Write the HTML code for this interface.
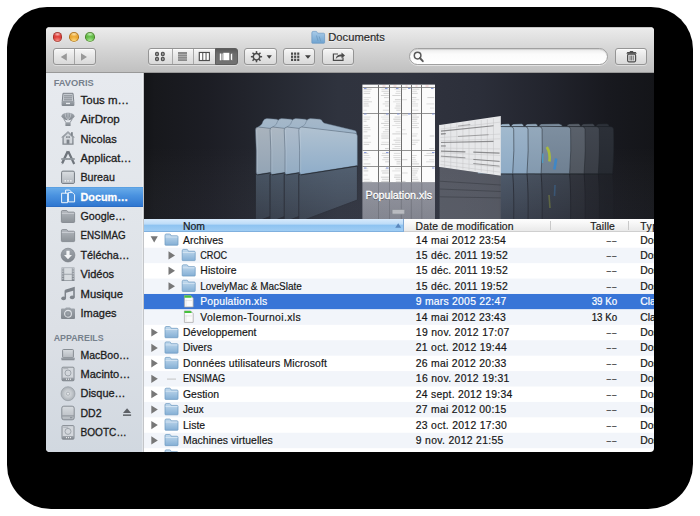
<!DOCTYPE html><html><head><meta charset="utf-8"><style>
*{margin:0;padding:0;box-sizing:border-box}
html,body{width:700px;height:516px;overflow:hidden;background:#fff;font-family:"Liberation Sans",sans-serif}
div,svg{position:absolute}
#shadow{left:7px;top:7px;width:686px;height:502px;background:#000;border-radius:40px 42px 45px 44px}
#win{left:46px;top:27px;width:608px;height:425px;background:#fff;border-radius:4px}
#toolbar{left:46px;top:27px;width:608px;height:46px;background:linear-gradient(#9a9a9a 0,#f0f0f0 1px,#e9e9e9 3px,#d5d5d5 50%,#c0c0c0 100%);border-bottom:1px solid #999;border-radius:4px 4px 0 0}
.btn{height:17px;top:48px;border:1px solid #959595;border-radius:3px;background:linear-gradient(#f6f6f6,#e6e6e6 50%,#d9d9d9);box-shadow:0 1px 0 rgba(255,255,255,.4),inset 0 1px 0 rgba(255,255,255,.7)}
.tl{top:32.1px;width:9.7px;height:9.7px;border-radius:50%;box-shadow:inset 0 0 0 .7px rgba(60,20,0,.35),0 .5px 0 rgba(255,255,255,.6)}
#sidebar{left:46px;top:73px;width:98px;height:379px;background:linear-gradient(#e7eaef,#e2e6eb 35%,#dce0e6 68%,#d1d8e0);border-bottom-left-radius:4px}
#header{left:144px;top:219px;width:510px;height:13px;background:linear-gradient(#fefefe,#f4f4f4 50%,#e9e9e9);border-bottom:1px solid #cfcfcf}
</style></head><body>
<div id="shadow"></div><div id="win"></div><div id="toolbar"></div>
<div class="tl" style="left:52.7px;background:radial-gradient(ellipse 40% 22% at 50% 22%,rgba(255,220,220,.8),rgba(255,255,255,0) 100%),radial-gradient(ellipse 50% 35% at 50% 85%,rgba(255,170,160,.7),rgba(255,255,255,0) 100%),radial-gradient(circle at 50% 50%,#e5453f 0,#d8403a 50%,#b32d28 80%,#8e2a26 100%)"></div>
<div class="tl" style="left:68.9px;background:radial-gradient(ellipse 40% 22% at 50% 22%,rgba(255,240,200,.8),rgba(255,255,255,0) 100%),radial-gradient(ellipse 50% 35% at 50% 85%,rgba(255,225,140,.8),rgba(255,255,255,0) 100%),radial-gradient(circle at 50% 50%,#f1b13d 0,#e8a532 50%,#c9861c 80%,#9a6a1e 100%)"></div>
<div class="tl" style="left:85.2px;background:radial-gradient(ellipse 40% 22% at 50% 22%,rgba(220,255,210,.8),rgba(255,255,255,0) 100%),radial-gradient(ellipse 50% 35% at 50% 85%,rgba(180,240,160,.8),rgba(255,255,255,0) 100%),radial-gradient(circle at 50% 50%,#6cc24e 0,#62b846 50%,#4a9a33 80%,#3a7328 100%)"></div>
<div class="btn" style="left:52.5px;width:43px"></div>
<div style="left:74px;top:49px;width:1px;height:15px;background:#a3a3a3"></div>
<div class="btn" style="left:147.5px;width:90.5px"></div>
<div style="left:171.5px;top:49px;width:1px;height:15px;background:#a8a8a8"></div>
<div style="left:193px;top:49px;width:1px;height:15px;background:#a8a8a8"></div>
<div style="left:214.5px;top:48px;width:23.5px;height:17px;background:linear-gradient(#595959,#6c6c6c 35%,#727272);border-radius:0 3px 3px 0;border:1px solid #5e5e5e"></div>
<div class="btn" style="left:244.3px;width:32.3px"></div>
<div class="btn" style="left:283.4px;width:32px"></div>
<div class="btn" style="left:322.3px;width:31.5px"></div>
<div style="left:409px;top:48px;width:199px;height:17px;border-radius:9px;background:linear-gradient(#ececec,#fbfbfb 35%,#fff);border:1px solid #a0a0a0;box-shadow:inset 0 1px 1px rgba(0,0,0,.12),0 1px 0 rgba(255,255,255,.5)"></div>
<div class="btn" style="left:615px;width:32px"></div>
<svg style="left:0;top:0" width="700" height="80" viewBox="0 0 700 80">
 <defs>
  <linearGradient id="fold" x1="0" y1="0" x2="0" y2="1"><stop offset="0" stop-color="#a9cbe8"/><stop offset="1" stop-color="#6fa3d0"/></linearGradient>
 </defs>
 <!-- back/forward arrows -->
 <path d="M60.8 57 L66.8 53.3 L66.8 60.7 Z" fill="#999"/>
 <path d="M87 57 L81 53.3 L81 60.7 Z" fill="#999"/>
 <!-- icon view -->
 <g fill="#9a9a9a" stroke="#4a4a4a" stroke-width="1.1">
  <rect x="155.6" y="52.3" width="2.8" height="3.4" rx="1.2"/>
  <rect x="161.4" y="52.3" width="2.8" height="3.4" rx="1.2"/>
  <rect x="155.6" y="57.3" width="2.8" height="3.4" rx="1.2"/>
  <rect x="161.4" y="57.3" width="2.8" height="3.4" rx="1.2"/>
 </g>
 <!-- list view -->
 <rect x="178" y="52" width="9" height="9" fill="#8a8a8a"/>
 <g fill="#b9b9b9"><rect x="178" y="54" width="9" height="0.7"/><rect x="178" y="56.3" width="9" height="0.7"/><rect x="178" y="58.6" width="9" height="0.7"/></g>
 <!-- column view -->
 <rect x="199.3" y="52.5" width="10" height="8" fill="none" stroke="#4d4d4d" stroke-width="1.2"/>
 <g fill="#fff"><rect x="200" y="53.2" width="2.2" height="6.6"/><rect x="203.3" y="53.2" width="2.2" height="6.6"/><rect x="206.5" y="53.2" width="2.2" height="6.6"/></g>
 <g fill="#4d4d4d"><rect x="202.3" y="53" width="0.9" height="7"/><rect x="205.6" y="53" width="0.9" height="7"/></g>
 <!-- cover flow icon (selected) -->
 <g fill="#fff">
  <rect x="219.8" y="53.5" width="1.6" height="6.8"/>
  <rect x="223.3" y="52.8" width="6" height="7.4"/>
  <path d="M230.8 54.2 L232.2 53.3 L232.2 60.5 L230.8 59.6 Z"/>
 </g>
 <rect x="222.2" y="53.5" width="0.8" height="6.6" fill="#cfcfcf"/>
 <!-- gear -->
 <g transform="translate(256.5 56.7)">
  <g fill="#4a4a4a">
   <rect x="-0.75" y="-5.6" width="1.5" height="11.2"/>
   <rect x="-0.75" y="-5.6" width="1.5" height="11.2" transform="rotate(45)"/>
   <rect x="-0.75" y="-5.6" width="1.5" height="11.2" transform="rotate(90)"/>
   <rect x="-0.75" y="-5.6" width="1.5" height="11.2" transform="rotate(135)"/>
  </g>
  <circle r="3.2" fill="#e2e2e2" stroke="#4a4a4a" stroke-width="1.5"/>
 </g>
 <path d="M266.6 55.2 L271.9 55.2 L269.25 58.7 Z" fill="#3f3f3f"/>
 <!-- arrange grid -->
 <g fill="#4a4a4a"><rect x="291.0" y="52.5" width="2.1" height="2.3"/><rect x="294.1" y="52.5" width="2.1" height="2.3"/><rect x="297.2" y="52.5" width="2.1" height="2.3"/><rect x="291.0" y="55.6" width="2.1" height="2.3"/><rect x="294.1" y="55.6" width="2.1" height="2.3"/><rect x="297.2" y="55.6" width="2.1" height="2.3"/><rect x="291.0" y="58.7" width="2.1" height="2.3"/><rect x="294.1" y="58.7" width="2.1" height="2.3"/><rect x="297.2" y="58.7" width="2.1" height="2.3"/></g>
 <path d="M305 55.3 L310.9 55.3 L307.95 58.7 Z" fill="#3f3f3f"/>
 <!-- share -->
 <path d="M338 54 L333.4 54 L333.4 60.4 L343 60.4 L343 57.5" fill="none" stroke="#4a4a4a" stroke-width="1.2"/>
 <path d="M335.8 59 C336.2 55.5 338.5 54.6 341.5 54.6 L341.5 52.6 L345 55.6 L341.5 58.6 L341.5 56.6 C339 56.6 337.2 57.2 335.8 59 Z" fill="#4a4a4a"/>
 <!-- magnifier -->
 <circle cx="417.6" cy="55.6" r="3.3" fill="none" stroke="#5a5a5a" stroke-width="1.5"/>
 <path d="M419.9 58 L422.8 61.2" stroke="#5a5a5a" stroke-width="1.9" stroke-linecap="round"/>
 <!-- trash -->
 <path d="M626.4 53.7 L627.3 51.9 L629.6 51.9 L630 51 L633 51 L633.4 51.9 L635.8 51.9 L636.8 53.7 Z" fill="#4d4d4d"/>
 <rect x="627.6" y="54.2" width="8" height="7.6" rx="1.2" fill="#dcdcdc" stroke="#4d4d4d" stroke-width="1.2"/>
 <g fill="#6a6a6a"><rect x="629.6" y="55.6" width="0.9" height="4.8"/><rect x="631.2" y="55.6" width="0.9" height="4.8"/><rect x="632.8" y="55.6" width="0.9" height="4.8"/></g>
 <!-- title folder -->
 <path d="M311.8 33 Q311.8 31.4 313 31.4 L316 31.4 Q316.8 31.4 317.2 32.4 L317.6 33.2 L323.6 33.2 Q324.6 33.2 324.6 34.2 L324.6 42.6 Q324.6 43.3 323.8 43.3 L312.6 43.3 Q311.8 43.3 311.8 42.6 Z" fill="url(#fold)" stroke="#5f90bd" stroke-width="0.6"/>
 <path d="M316.5 35.5 L318 41 M319.2 36.5 L320.8 41.5" stroke="#6f9cc2" stroke-width="0.9" fill="none"/>
 <text x="328.3" y="42.2" font-family="Liberation Sans" font-size="11.1" fill="#fff" opacity=".6" textLength="56.5" lengthAdjust="spacingAndGlyphs">Documents</text><text x="328.3" y="41.2" font-family="Liberation Sans" font-size="11.1" fill="#2a2a2a" stroke="#2a2a2a" stroke-width="0.2" textLength="56.5" lengthAdjust="spacingAndGlyphs">Documents</text>
</svg>
<div id="sidebar"></div>
<div style="left:142px;top:73px;width:1px;height:379px;background:rgba(255,255,255,.35)"></div>
<div style="left:143px;top:73px;width:1px;height:379px;background:#c3c5c8"></div>
<div style="left:46px;top:187px;width:97px;height:19.5px;background:linear-gradient(#67abe9,#4b93e0 40%,#2f77d0);border-top:1px solid #5aa0e2;border-bottom:1px solid #2a6cc4"></div>
<svg style="left:0;top:0" width="700" height="516" viewBox="0 0 700 516"><defs><linearGradient id="sic" x1="0" y1="0" x2="0" y2="1"><stop offset="0" stop-color="#a0a6ad"/><stop offset="1" stop-color="#80868d"/></linearGradient><linearGradient id="sfold" x1="0" y1="0" x2="0" y2="1"><stop offset="0" stop-color="#b3b8be"/><stop offset="1" stop-color="#8c9298"/></linearGradient></defs><text x="53.7" y="85.9" font-family="Liberation Sans" font-size="9.3" font-weight="bold" fill="#76808c" textLength="40" lengthAdjust="spacingAndGlyphs">FAVORIS</text><text x="53.7" y="340.6" font-family="Liberation Sans" font-size="9.3" font-weight="bold" fill="#76808c" textLength="50" lengthAdjust="spacingAndGlyphs">APPAREILS</text><text x="80.5" y="103.8" font-family="Liberation Sans" font-size="11.5" font-weight="normal" fill="#1c1c1c" stroke="#1c1c1c" stroke-width="0.3" textLength="48.6" lengthAdjust="spacingAndGlyphs" >Tous m…</text><text x="80.5" y="123.18" font-family="Liberation Sans" font-size="11.5" font-weight="normal" fill="#1c1c1c" stroke="#1c1c1c" stroke-width="0.3" textLength="39.3" lengthAdjust="spacingAndGlyphs" >AirDrop</text><text x="80.5" y="142.56" font-family="Liberation Sans" font-size="11.5" font-weight="normal" fill="#1c1c1c" stroke="#1c1c1c" stroke-width="0.3" textLength="36.3" lengthAdjust="spacingAndGlyphs" >Nicolas</text><text x="80.5" y="161.94" font-family="Liberation Sans" font-size="11.5" font-weight="normal" fill="#1c1c1c" stroke="#1c1c1c" stroke-width="0.3" textLength="51" lengthAdjust="spacingAndGlyphs" >Applicat…</text><text x="80.5" y="181.32" font-family="Liberation Sans" font-size="11.5" font-weight="normal" fill="#1c1c1c" stroke="#1c1c1c" stroke-width="0.3" textLength="34.4" lengthAdjust="spacingAndGlyphs" >Bureau</text><text x="80.5" y="201.50" font-family="Liberation Sans" font-size="11.5" font-weight="bold" fill="#1f5fb0" opacity=".5" textLength="47.6" lengthAdjust="spacingAndGlyphs">Docum…</text><text x="80.5" y="200.7" font-family="Liberation Sans" font-size="11.5" font-weight="bold" fill="#fff" stroke="#fff" stroke-width="0.3" textLength="47.6" lengthAdjust="spacingAndGlyphs" >Docum…</text><text x="80.5" y="220.08" font-family="Liberation Sans" font-size="11.5" font-weight="normal" fill="#1c1c1c" stroke="#1c1c1c" stroke-width="0.3" textLength="45.2" lengthAdjust="spacingAndGlyphs" >Google…</text><text x="80.5" y="239.46" font-family="Liberation Sans" font-size="11.5" font-weight="normal" fill="#1c1c1c" stroke="#1c1c1c" stroke-width="0.3" textLength="45.2" lengthAdjust="spacingAndGlyphs" >ENSIMAG</text><text x="80.5" y="258.84" font-family="Liberation Sans" font-size="11.5" font-weight="normal" fill="#1c1c1c" stroke="#1c1c1c" stroke-width="0.3" textLength="49" lengthAdjust="spacingAndGlyphs" >Télécha…</text><text x="80.5" y="278.22" font-family="Liberation Sans" font-size="11.5" font-weight="normal" fill="#1c1c1c" stroke="#1c1c1c" stroke-width="0.3" textLength="33.6" lengthAdjust="spacingAndGlyphs" >Vidéos</text><text x="80.5" y="297.6" font-family="Liberation Sans" font-size="11.5" font-weight="normal" fill="#1c1c1c" stroke="#1c1c1c" stroke-width="0.3" textLength="42.6" lengthAdjust="spacingAndGlyphs" >Musique</text><text x="80.5" y="316.98" font-family="Liberation Sans" font-size="11.5" font-weight="normal" fill="#1c1c1c" stroke="#1c1c1c" stroke-width="0.3" textLength="36.1" lengthAdjust="spacingAndGlyphs" >Images</text><text x="80.5" y="358.6" font-family="Liberation Sans" font-size="11.5" font-weight="normal" fill="#1c1c1c" stroke="#1c1c1c" stroke-width="0.3" textLength="49" lengthAdjust="spacingAndGlyphs" >MacBoo…</text><text x="80.5" y="378.0" font-family="Liberation Sans" font-size="11.5" font-weight="normal" fill="#1c1c1c" stroke="#1c1c1c" stroke-width="0.3" textLength="49.8" lengthAdjust="spacingAndGlyphs" >Macinto…</text><text x="80.5" y="397.4" font-family="Liberation Sans" font-size="11.5" font-weight="normal" fill="#1c1c1c" stroke="#1c1c1c" stroke-width="0.3" textLength="45" lengthAdjust="spacingAndGlyphs" >Disque…</text><text x="80.5" y="416.8" font-family="Liberation Sans" font-size="11.5" font-weight="normal" fill="#1c1c1c" stroke="#1c1c1c" stroke-width="0.3" textLength="21.1" lengthAdjust="spacingAndGlyphs" >DD2</text><text x="80.5" y="436.2" font-family="Liberation Sans" font-size="11.5" font-weight="normal" fill="#1c1c1c" stroke="#1c1c1c" stroke-width="0.3" textLength="46" lengthAdjust="spacingAndGlyphs" >BOOTC…</text><path d="M123 413 L127.05 408.3 L131.1 413 Z" fill="#5d6166"/><rect x="123" y="414.4" width="8.1" height="1.5" fill="#5d6166"/><defs><linearGradient id="sdesk" x1="0" y1="0" x2="0" y2="1"><stop offset="0" stop-color="#d8dce0"/><stop offset="1" stop-color="#b4b9bf"/></linearGradient><radialGradient id="scd"><stop offset="0" stop-color="#e3e6e9"/><stop offset="1" stop-color="#aab0b6"/></radialGradient></defs><g transform="translate(61 92.8)"><path d="M2 0.5 L12 0.5 L12.8 8.8 L1.2 8.8 Z" fill="#c4c9cf" stroke="#7d838a" stroke-width="1"/><rect x="3" y="2.6" width="8" height="0.9" fill="#7d838a"/><rect x="3" y="4.6" width="8" height="0.9" fill="#7d838a"/><rect x="3" y="6.6" width="8" height="0.9" fill="#7d838a"/><rect x="0.6" y="8.4" width="12.8" height="4.8" rx="1" fill="url(#sic)"/><rect x="5" y="10" width="4" height="1.3" fill="#e8ebee"/></g><g transform="translate(61 112)"><path d="M0.4 4.6 C0.4 -0.6 13.6 -0.6 13.6 4.6 C12.4 7 9.6 8.3 7 8.3 C4.4 8.3 1.6 7 0.4 4.6 Z" fill="url(#sic)"/><path d="M7 0.5 L7 8 M4.2 1.2 Q3.8 5 6.8 8 M9.8 1.2 Q10.2 5 7.2 8" stroke="#c9cdd2" stroke-width="0.7" fill="none"/><path d="M2.8 7 L4.9 10.5 M11.2 7 L9.1 10.5" stroke="#7d838a" stroke-width="0.8"/><rect x="4.4" y="10.3" width="5.2" height="3.6" rx="0.5" fill="url(#sic)"/></g><g transform="translate(61 131)"><path d="M7 0 L14 6.6 L12.6 6.6 L12.6 13.7 L1.4 13.7 L1.4 6.6 L0 6.6 Z" fill="url(#sic)"/><path d="M7 2.2 L11.2 6.3 L11.2 12.6 L2.8 12.6 L2.8 6.3 Z" fill="#d3d7dc"/><rect x="10" y="1.2" width="1.8" height="3.5" fill="#7d838a"/><rect x="5.6" y="8.6" width="2.8" height="4.2" fill="#7d838a"/><rect x="5.2" y="5.2" width="1.4" height="1.8" fill="#7d838a"/><rect x="7.4" y="5.2" width="1.4" height="1.8" fill="#7d838a"/></g><g transform="translate(61 150.6)"><path d="M7.2 0.6 L13.2 13.4" stroke="#6f757c" stroke-width="2.2" fill="none"/><path d="M6.8 0.6 L1.2 12.6" stroke="#6f757c" stroke-width="2.4" fill="none"/><path d="M1.2 12.6 L0.6 14 L2.2 13.2 Z" fill="#6f757c"/><path d="M0.3 8.4 L13.7 8.4" stroke="#8a9097" stroke-width="1.8"/><path d="M1 8.4 L13 8.4" stroke="#c3c8cd" stroke-width="0.5" stroke-dasharray="0.6 1"/></g><g transform="translate(61 170.6)"><rect x="0.5" y="0.5" width="13" height="12.4" rx="1.5" fill="#b9bec4" stroke="#7d838a" stroke-width="1"/><rect x="1.4" y="1.4" width="11.2" height="10.6" fill="url(#sdesk)"/><rect x="3.6" y="9.6" width="1.3" height="1.3" fill="#fff"/><rect x="6.4" y="9.6" width="1.3" height="1.3" fill="#fff"/><rect x="9.2" y="9.6" width="1.3" height="1.3" fill="#fff"/></g><g transform="translate(61 189.6)"><path d="M4.6 0.5 L8.5 0.5 L11 3 L11 10 L4.6 10 Z" fill="none" stroke="#fff" stroke-width="0.9"/><path d="M7.4 3 L11.4 3 L13.6 5.2 L13.6 12.3 L7.4 12.3 Z" fill="#4a90dc" stroke="#fff" stroke-width="0.9"/><path d="M0.6 3.6 L6.6 3.6 L6.6 13.1 L0.6 13.1 Z" fill="#4a90dc" stroke="#fff" stroke-width="0.9"/></g><g transform="translate(61 210.1)"><path d="M0.4 1.6 Q0.4 0.4 1.4 0.4 L5.4 0.4 Q6.2 0.4 6.5 1.3 L6.8 2 L12.6 2 Q13.6 2 13.6 3 L13.6 11.6 Q13.6 12.4 12.8 12.4 L1.2 12.4 Q0.4 12.4 0.4 11.6 Z" fill="url(#sfold)" stroke="#7d838a" stroke-width="0.8"/><path d="M0.8 3.2 L13.2 3.2" stroke="#d4d8dd" stroke-width="0.8"/></g><g transform="translate(61 229.2)"><path d="M0.4 1.6 Q0.4 0.4 1.4 0.4 L5.4 0.4 Q6.2 0.4 6.5 1.3 L6.8 2 L12.6 2 Q13.6 2 13.6 3 L13.6 11.6 Q13.6 12.4 12.8 12.4 L1.2 12.4 Q0.4 12.4 0.4 11.6 Z" fill="url(#sfold)" stroke="#7d838a" stroke-width="0.8"/><path d="M0.8 3.2 L13.2 3.2" stroke="#d4d8dd" stroke-width="0.8"/></g><g transform="translate(61 248.1)"><circle cx="7" cy="7" r="6.9" fill="url(#sic)"/><circle cx="7" cy="7" r="6.9" fill="none" stroke="#737980" stroke-width=".6"/><path d="M5.4 2.6 L8.6 2.6 L8.6 6.8 L11 6.8 L7 11.2 L3 6.8 L5.4 6.8 Z" fill="#f4f5f7"/></g><g transform="translate(61 267.1)"><rect x="0.5" y="0.3" width="13" height="13.6" fill="url(#sic)"/><rect x="3.2" y="1" width="7.6" height="5.7" fill="#d8dce0"/><rect x="3.2" y="7.5" width="7.6" height="5.7" fill="#d8dce0"/><rect x="1.2" y="1.0" width="1.2" height="1.2" fill="#c8ccd1"/><rect x="11.6" y="1.0" width="1.2" height="1.2" fill="#c8ccd1"/><rect x="1.2" y="3.5" width="1.2" height="1.2" fill="#c8ccd1"/><rect x="11.6" y="3.5" width="1.2" height="1.2" fill="#c8ccd1"/><rect x="1.2" y="6.0" width="1.2" height="1.2" fill="#c8ccd1"/><rect x="11.6" y="6.0" width="1.2" height="1.2" fill="#c8ccd1"/><rect x="1.2" y="8.5" width="1.2" height="1.2" fill="#c8ccd1"/><rect x="11.6" y="8.5" width="1.2" height="1.2" fill="#c8ccd1"/><rect x="1.2" y="11.0" width="1.2" height="1.2" fill="#c8ccd1"/><rect x="11.6" y="11.0" width="1.2" height="1.2" fill="#c8ccd1"/></g><g transform="translate(61 287.4)"><path d="M4.3 3 L13 0.4 L13 10" stroke="#7e848b" stroke-width="1.6" fill="none"/><path d="M4.3 3 L13 0.4 L13 3 L4.3 5.5 Z" fill="#7e848b"/><path d="M4.3 3 L4.3 11" stroke="#7e848b" stroke-width="1.5"/><ellipse cx="2.6" cy="11" rx="2.4" ry="1.8" fill="#7e848b"/><ellipse cx="11.2" cy="10" rx="2.4" ry="1.8" fill="#7e848b"/></g><g transform="translate(61 307.4)"><path d="M4 1.2 L5 0 L9 0 L10 1.2 L13 1.2 Q14 1.2 14 2.2 L14 10.6 Q14 11.6 13 11.6 L1 11.6 Q0 11.6 0 10.6 L0 2.2 Q0 1.2 1 1.2 Z" fill="url(#sic)"/><circle cx="7" cy="6.4" r="3.4" fill="none" stroke="#dfe2e6" stroke-width="1.1"/><circle cx="7" cy="6.4" r="1.4" fill="#9aa0a7"/></g><g transform="translate(61 349)"><rect x="1.6" y="0.5" width="10.8" height="8.2" rx="0.8" fill="url(#sdesk)" stroke="#7d838a" stroke-width="0.9"/><path d="M0 8.8 L14 8.8 L13.4 11.2 L0.6 11.2 Z" fill="url(#sic)"/></g><g transform="translate(61 366.8)"><rect x="1" y="0.4" width="12" height="13.6" rx="1" fill="#d3d7dc" stroke="#7d838a" stroke-width="0.9"/><circle cx="7" cy="6.2" r="3" fill="none" stroke="#9aa0a7" stroke-width="0.9"/><rect x="2.2" y="1.6" width="5" height="0.7" fill="#9aa0a7"/><rect x="1" y="10.8" width="12" height="3.2" fill="url(#sic)"/><rect x="5" y="11.8" width="1" height="1.2" fill="#e8eaec"/><rect x="7" y="11.8" width="1" height="1.2" fill="#e8eaec"/><rect x="9" y="11.8" width="1" height="1.2" fill="#e8eaec"/></g><g transform="translate(61 386.5)"><circle cx="7" cy="7.2" r="7" fill="url(#scd)" stroke="#8f959c" stroke-width="0.6"/><circle cx="7" cy="7.2" r="4" fill="none" stroke="#c6cacf" stroke-width="0.7"/><circle cx="7" cy="7.2" r="1.6" fill="#e4e7ea" stroke="#8f959c" stroke-width="0.6"/></g><g transform="translate(61 405.7)"><rect x="0.8" y="0.5" width="12.4" height="13.6" rx="2" fill="url(#sdesk)" stroke="#7d838a" stroke-width="0.9"/><path d="M1.2 10.2 L12.8 10.2" stroke="#7d838a" stroke-width="0.8"/><rect x="9" y="11.6" width="2.4" height="0.9" fill="#7d838a"/></g><g transform="translate(61 425.2)"><rect x="1" y="0.4" width="12" height="13.6" rx="1" fill="#d3d7dc" stroke="#7d838a" stroke-width="0.9"/><circle cx="7" cy="6.2" r="3" fill="none" stroke="#9aa0a7" stroke-width="0.9"/><rect x="2.2" y="1.6" width="5" height="0.7" fill="#9aa0a7"/><rect x="1" y="10.8" width="12" height="3.2" fill="url(#sic)"/><rect x="5" y="11.8" width="1" height="1.2" fill="#e8eaec"/><rect x="7" y="11.8" width="1" height="1.2" fill="#e8eaec"/><rect x="9" y="11.8" width="1" height="1.2" fill="#e8eaec"/></g></svg>
<svg style="left:144px;top:73px" width="510" height="146" viewBox="144 73 510 146"><defs>
<linearGradient id="cbg" x1="144" y1="0" x2="654" y2="0" gradientUnits="userSpaceOnUse">
 <stop offset="0" stop-color="#131417"/><stop offset="0.02" stop-color="#17181c"/><stop offset="0.125" stop-color="#1c1d24"/><stop offset="0.263" stop-color="#262932"/><stop offset="0.38" stop-color="#2f333e"/><stop offset="0.498" stop-color="#31343f"/><stop offset="0.655" stop-color="#2c2f3a"/><stop offset="0.792" stop-color="#22242d"/><stop offset="0.91" stop-color="#18191f"/><stop offset="1" stop-color="#141519"/>
</linearGradient>
<linearGradient id="cvert" x1="0" y1="73" x2="0" y2="219" gradientUnits="userSpaceOnUse">
 <stop offset="0" stop-color="#fff" stop-opacity="0"/><stop offset="0.5" stop-color="#fff" stop-opacity="0"/><stop offset="1" stop-color="#9aa4c0" stop-opacity="0.05"/>
</linearGradient>
<linearGradient id="fbody" x1="0" y1="0" x2="0" y2="1">
 <stop offset="0" stop-color="#b4c4d2"/><stop offset="0.5" stop-color="#a2b9cd"/><stop offset="1" stop-color="#8fb0ce"/>
</linearGradient>
<linearGradient id="ftab" x1="0" y1="0" x2="0" y2="1">
 <stop offset="0" stop-color="#a6b8c9"/><stop offset="1" stop-color="#9cb3c8"/>
</linearGradient>
<linearGradient id="refl" x1="0" y1="0" x2="0" y2="1">
 <stop offset="0" stop-color="#8aa2ba" stop-opacity="0.42"/><stop offset="1" stop-color="#8aa2ba" stop-opacity="0.05"/>
</linearGradient>
<linearGradient id="drefl" x1="0" y1="181" x2="0" y2="219" gradientUnits="userSpaceOnUse">
 <stop offset="0" stop-color="#e2e3ec" stop-opacity="0.55"/><stop offset="1" stop-color="#e2e3ec" stop-opacity="0.45"/>
</linearGradient>
<linearGradient id="rfbody" x1="0" y1="0" x2="0" y2="1">
 <stop offset="0" stop-color="#a3bdd3"/><stop offset="1" stop-color="#8db0cf"/>
</linearGradient>
</defs><rect x="144" y="73" width="510" height="146" fill="url(#cbg)"/><rect x="144" y="73" width="510" height="146" fill="url(#cvert)"/><mask id="rmask" maskUnits="userSpaceOnUse" x="144" y="150" width="510" height="70"><rect x="144" y="150" width="510" height="70" fill="url(#mgrad)"/></mask><linearGradient id="mgrad" x1="0" y1="165" x2="0" y2="219" gradientUnits="userSpaceOnUse"><stop offset="0" stop-color="#fff"/><stop offset="1" stop-color="#fff" stop-opacity="0.45"/></linearGradient><g opacity="0.34" mask="url(#rmask)"><path d="M255.4 174.4 L314.0 165.6 L314.0 200 L255.4 222 Z" fill="#90b0cc" stroke="#20242b" stroke-width="0.9"/><path d="M270.0 174.4 L328.6 165.6 L328.6 200 L270.0 222 Z" fill="#90b0cc" stroke="#20242b" stroke-width="0.9"/><path d="M284.2 174.4 L342.8 165.6 L342.8 200 L284.2 222 Z" fill="#90b0cc" stroke="#20242b" stroke-width="0.9"/><path d="M298.8 174.4 L357.40000000000003 165.6 L357.40000000000003 200 L298.8 222 Z" fill="#90b0cc" stroke="#20242b" stroke-width="0.9"/></g><linearGradient id="lfg0" x1="0" y1="0" x2="0" y2="1"><stop offset="0" stop-color="#a9b3bd"/><stop offset="1" stop-color="#93a4b5"/></linearGradient><path d="M257.4 127.5 L259.9 125.8 Q262.0 125 263.0 121.2 Q264.0 118.6 266.9 118.6 L276.4 119.2 Q278.4 119.5 279.4 122 Q280.4 123.4 282.4 123.5 L311.5 130.6 Q313.0 131 313.0 132.5 L313.0 134 Z" fill="url(#ftab)" stroke="#5f7286" stroke-width="0.45"/><path d="M255.4 130 Q255.4 127 258.4 127 L311.5 133.3 Q314.0 133.6 314.0 136 L314.0 165.6 L257.9 174.4 Q256.2 174.6 256.2 172.5 Q256.7 150 255.4 130 Z" fill="url(#lfg0)" stroke="#4e5f71" stroke-width="0.5"/><path d="M256.7 130 Q257.6 150 257.3 172" stroke="#d0dae3" stroke-width="0.6" fill="none" opacity=".45"/><path d="M257.4 174.9 L314.0 166.1" stroke="#1e2228" stroke-width="1" opacity=".7"/><linearGradient id="lfg1" x1="0" y1="0" x2="0" y2="1"><stop offset="0" stop-color="#adb8c3"/><stop offset="1" stop-color="#94a9bc"/></linearGradient><path d="M272.0 127.5 L274.5 125.8 Q276.6 125 277.6 121.2 Q278.6 118.6 281.5 118.6 L291.0 119.2 Q293.0 119.5 294.0 122 Q295.0 123.4 297.0 123.5 L326.1 130.6 Q327.6 131 327.6 132.5 L327.6 134 Z" fill="url(#ftab)" stroke="#5f7286" stroke-width="0.45"/><path d="M270.0 130 Q270.0 127 273.0 127 L326.1 133.3 Q328.6 133.6 328.6 136 L328.6 165.6 L272.5 174.4 Q270.8 174.6 270.8 172.5 Q271.3 150 270.0 130 Z" fill="url(#lfg1)" stroke="#4e5f71" stroke-width="0.5"/><path d="M271.3 130 Q272.2 150 271.9 172" stroke="#d0dae3" stroke-width="0.6" fill="none" opacity=".45"/><path d="M272.0 174.9 L328.6 166.1" stroke="#1e2228" stroke-width="1" opacity=".7"/><linearGradient id="lfg2" x1="0" y1="0" x2="0" y2="1"><stop offset="0" stop-color="#aebccb"/><stop offset="1" stop-color="#93acc3"/></linearGradient><path d="M286.2 127.5 L288.7 125.8 Q290.8 125 291.8 121.2 Q292.8 118.6 295.7 118.6 L305.2 119.2 Q307.2 119.5 308.2 122 Q309.2 123.4 311.2 123.5 L340.3 130.6 Q341.8 131 341.8 132.5 L341.8 134 Z" fill="url(#ftab)" stroke="#5f7286" stroke-width="0.45"/><path d="M284.2 130 Q284.2 127 287.2 127 L340.3 133.3 Q342.8 133.6 342.8 136 L342.8 165.6 L286.7 174.4 Q285.0 174.6 285.0 172.5 Q285.5 150 284.2 130 Z" fill="url(#lfg2)" stroke="#4e5f71" stroke-width="0.5"/><path d="M285.5 130 Q286.4 150 286.09999999999997 172" stroke="#d0dae3" stroke-width="0.6" fill="none" opacity=".45"/><path d="M286.2 174.9 L342.8 166.1" stroke="#1e2228" stroke-width="1" opacity=".7"/><linearGradient id="lfg3" x1="0" y1="0" x2="0" y2="1"><stop offset="0" stop-color="#b1c2d1"/><stop offset="1" stop-color="#8fadc9"/></linearGradient><path d="M300.8 127.5 L303.3 125.8 Q305.40000000000003 125 306.40000000000003 121.2 Q307.40000000000003 118.6 310.3 118.6 L319.8 119.2 Q321.8 119.5 322.8 122 Q323.8 123.4 325.8 123.5 L354.90000000000003 130.6 Q356.40000000000003 131 356.40000000000003 132.5 L356.40000000000003 134 Z" fill="url(#ftab)" stroke="#5f7286" stroke-width="0.45"/><path d="M298.8 130 Q298.8 127 301.8 127 L354.90000000000003 133.3 Q357.40000000000003 133.6 357.40000000000003 136 L357.40000000000003 165.6 L301.3 174.4 Q299.6 174.6 299.6 172.5 Q300.1 150 298.8 130 Z" fill="url(#lfg3)" stroke="#4e5f71" stroke-width="0.5"/><path d="M300.1 130 Q301.0 150 300.7 172" stroke="#d0dae3" stroke-width="0.6" fill="none" opacity=".45"/><path d="M300.8 174.9 L357.40000000000003 166.1" stroke="#1e2228" stroke-width="1" opacity=".7"/><g opacity="0.38" mask="url(#rmask)"><path d="M596.3 173.7 L612.6 173.7 Q614.1 190 613.6 222 L596.3 222 Z" fill="#262a31" stroke="#1d2026" stroke-width="0.8"/><path d="M581.5 173.7 L598.3 173.7 Q599.8 190 599.3 222 L581.5 222 Z" fill="#393d45" stroke="#1d2026" stroke-width="0.8"/><path d="M567.2 173.7 L584.1 173.7 Q585.6 190 585.1 222 L567.2 222 Z" fill="#50565f" stroke="#1d2026" stroke-width="0.8"/><path d="M539.3 173.7 L569.6 173.7 Q571.1 190 570.6 222 L539.3 222 Z" fill="#6f8092" stroke="#1d2026" stroke-width="0.8"/><path d="M525.5 173.7 L541.1 173.7 Q542.6 190 542.1 222 L525.5 222 Z" fill="#8399ae" stroke="#1d2026" stroke-width="0.8"/><path d="M511.5 173.7 L527.0 173.7 Q528.5 190 528.0 222 L511.5 222 Z" fill="#8aa5bf" stroke="#1d2026" stroke-width="0.8"/><path d="M500.2 173.7 L512.7 173.7 Q514.2 190 513.7 222 L500.2 222 Z" fill="#8eabc6" stroke="#1d2026" stroke-width="0.8"/></g><linearGradient id="rg0" x1="0" y1="0" x2="0" y2="1"><stop offset="0" stop-color="#2c3038"/><stop offset="1" stop-color="#262a31"/></linearGradient><path d="M595.8 126.6 Q596.3 124.2 598.3 124 L607.216 123.8 Q608.56 124 609.4 126.6 Z" fill="#2c3038" stroke="#1d2026" stroke-width="0.4"/><path d="M577.6 126.2 L611.1 126.7 Q613.6 126.9 613.6 129.5 Q614.4 150 612.6 173.7 L577.6 173.7 Z" fill="url(#rg0)" stroke="#1d2026" stroke-width="0.5"/><linearGradient id="rg1" x1="0" y1="0" x2="0" y2="1"><stop offset="0" stop-color="#41464f"/><stop offset="1" stop-color="#393d45"/></linearGradient><path d="M581.0 126.6 Q581.5 124.2 583.5 124 L592.726 123.8 Q594.11 124 594.9749999999999 126.6 Z" fill="#41464f" stroke="#1d2026" stroke-width="0.4"/><path d="M563.3 126.2 L596.8 126.7 Q599.3 126.9 599.3 129.5 Q600.0999999999999 150 598.3 173.7 L563.3 173.7 Z" fill="url(#rg1)" stroke="#1d2026" stroke-width="0.5"/><linearGradient id="rg2" x1="0" y1="0" x2="0" y2="1"><stop offset="0" stop-color="#5a616b"/><stop offset="1" stop-color="#50565f"/></linearGradient><path d="M566.7 126.6 Q567.2 124.2 569.2 124 L578.488 123.8 Q579.88 124 580.75 126.6 Z" fill="#5a616b" stroke="#1d2026" stroke-width="0.4"/><path d="M549.1 126.2 L582.6 126.7 Q585.1 126.9 585.1 129.5 Q585.9 150 584.1 173.7 L549.1 173.7 Z" fill="url(#rg2)" stroke="#1d2026" stroke-width="0.5"/><linearGradient id="rg3" x1="0" y1="0" x2="0" y2="1"><stop offset="0" stop-color="#7e8fa0"/><stop offset="1" stop-color="#6f8092"/></linearGradient><path d="M538.8 126.6 Q539.3 124.2 541.3 124 L558.896 123.8 Q561.36 124 562.9 126.6 Z" fill="#7e8fa0" stroke="#1d2026" stroke-width="0.4"/><path d="M534.6 126.2 L568.1 126.7 Q570.6 126.9 570.6 129.5 Q571.4 150 569.6 173.7 L534.6 173.7 Z" fill="url(#rg3)" stroke="#1d2026" stroke-width="0.5"/><path d="M546.8 147 Q550.6 153 549.4 161.5" stroke="#a8bb3c" stroke-width="2.6" fill="none"/><path d="M556.2 158.5 L554.4 169.5" stroke="#3f87c6" stroke-width="2.6"/><path d="M549 195 L550 208" stroke="#b8c43a" stroke-width="1.6" opacity=".3"/><path d="M555 185 L554.5 196" stroke="#3b8ad4" stroke-width="1.6" opacity=".3"/><linearGradient id="rg4" x1="0" y1="0" x2="0" y2="1"><stop offset="0" stop-color="#94a9bc"/><stop offset="1" stop-color="#8399ae"/></linearGradient><path d="M525.0 126.6 Q525.5 124.2 527.5 124 L535.982 123.8 Q537.27 124 538.075 126.6 Z" fill="#94a9bc" stroke="#1d2026" stroke-width="0.4"/><path d="M506.1 126.2 L539.6 126.7 Q542.1 126.9 542.1 129.5 Q542.9 150 541.1 173.7 L506.1 173.7 Z" fill="url(#rg4)" stroke="#1d2026" stroke-width="0.5"/><linearGradient id="rg5" x1="0" y1="0" x2="0" y2="1"><stop offset="0" stop-color="#9cb3c8"/><stop offset="1" stop-color="#8aa5bf"/></linearGradient><path d="M511.0 126.6 Q511.5 124.2 513.5 124 L521.92 123.8 Q523.2 124 524.0 126.6 Z" fill="#9cb3c8" stroke="#1d2026" stroke-width="0.4"/><path d="M492.0 126.2 L525.5 126.7 Q528.0 126.9 528.0 129.5 Q528.8 150 527.0 173.7 L492.0 173.7 Z" fill="url(#rg5)" stroke="#1d2026" stroke-width="0.5"/><linearGradient id="rg6" x1="0" y1="0" x2="0" y2="1"><stop offset="0" stop-color="#a2bace"/><stop offset="1" stop-color="#8eabc6"/></linearGradient><path d="M499.7 126.6 Q500.2 124.2 502.2 124 L508.76000000000005 123.8 Q509.8 124 510.45000000000005 126.6 Z" fill="#a2bace" stroke="#1d2026" stroke-width="0.4"/><path d="M477.70000000000005 126.2 L511.20000000000005 126.7 Q513.7 126.9 513.7 129.5 Q514.5 150 512.7 173.7 L477.70000000000005 173.7 Z" fill="url(#rg6)" stroke="#1d2026" stroke-width="0.5"/><path d="M542.9 153.5 L542.6 163" stroke="#4b9cc4" stroke-width="1.3"/><path d="M439.6 167 L500.8 175.8 L500.8 219 L439.6 219 Z" fill="#c4c7d0" opacity=".26"/><path d="M439.6 181.2 L500.8 185.0" stroke="#30333a" stroke-width="0.9" opacity=".5"/><path d="M439.6 189.0 L500.8 191.5" stroke="#30333a" stroke-width="0.9" opacity=".5"/><path d="M439.6 196.8 L500.8 197.9" stroke="#30333a" stroke-width="0.9" opacity=".5"/><path d="M439.7 124.9 L500.8 116.1 L500.8 175.8 L439.7 167 Z" fill="#e6e7e9"/><path d="M444.59 125.07 L444.59 166.83" stroke="#c9c9cb" stroke-width="0.6"/><path d="M450.70 124.22 L450.70 167.68" stroke="#c9c9cb" stroke-width="0.6"/><path d="M456.81 123.38 L456.81 168.52" stroke="#c9c9cb" stroke-width="0.6"/><path d="M462.92 122.53 L462.92 169.37" stroke="#c9c9cb" stroke-width="0.6"/><path d="M469.03 121.69 L469.03 170.21" stroke="#c9c9cb" stroke-width="0.6"/><path d="M475.14 120.84 L475.14 171.06" stroke="#c9c9cb" stroke-width="0.6"/><path d="M481.25 120.00 L481.25 171.90" stroke="#c9c9cb" stroke-width="0.6"/><path d="M487.36 119.15 L487.36 172.75" stroke="#c9c9cb" stroke-width="0.6"/><path d="M493.47 118.31 L493.47 173.59" stroke="#c9c9cb" stroke-width="0.6"/><path d="M440.31 129.04 L500.19 122.14" stroke="#c4c4c6" stroke-width="0.5"/><path d="M440.31 137.49 L500.19 134.05" stroke="#c4c4c6" stroke-width="0.5"/><path d="M440.31 140.88 L500.19 138.81" stroke="#c4c4c6" stroke-width="0.5"/><path d="M440.31 148.06 L500.19 148.93" stroke="#c4c4c6" stroke-width="0.5"/><path d="M440.31 152.71 L500.19 155.47" stroke="#c4c4c6" stroke-width="0.5"/><path d="M440.31 156.94 L500.19 161.43" stroke="#c4c4c6" stroke-width="0.5"/><path d="M440.31 161.17 L500.19 167.38" stroke="#c4c4c6" stroke-width="0.5"/><path d="M440.31 164.55 L500.19 172.14" stroke="#c4c4c6" stroke-width="0.5"/><path d="M440.92 131.09 L493.47 125.79" stroke="#6e6e70" stroke-width="1.1" opacity=".75"/><path d="M440.92 142.55 L493.47 141.34" stroke="#6e6e70" stroke-width="1.1" opacity=".75"/><path d="M440.92 134.06 L445.81 133.67" stroke="#6e6e70" stroke-width="1.4" opacity=".75"/><path d="M440.92 145.95 L445.81 145.95" stroke="#6e6e70" stroke-width="1.2" opacity=".75"/><path d="M440.92 151.04 L465.36 151.89" stroke="#6e6e70" stroke-width="1.2" opacity=".75"/><path d="M473.31 152.16 L499.58 153.07" stroke="#6e6e70" stroke-width="1.2" opacity=".75"/><path d="M440.92 156.14 L465.36 157.83" stroke="#6e6e70" stroke-width="0.9" opacity=".75"/><path d="M473.31 159.41 L499.58 161.38" stroke="#6e6e70" stroke-width="1.0" opacity=".75"/><path d="M473.31 163.56 L499.58 166.13" stroke="#6e6e70" stroke-width="0.9" opacity=".75"/><path d="M458.03 126.05 L470.25 124.57" stroke="#6e6e70" stroke-width="0.7" opacity=".75"/><path d="M458.03 136.47 L488.58 134.71" stroke="#6e6e70" stroke-width="0.7" opacity=".75"/><path d="M439.7 124.9 L439.7 167" stroke="#f6f6f6" stroke-width="1"/><rect x="362.4" y="182.3" width="72.6" height="37" fill="url(#drefl)"/><path d="M378.5 181 L378.5 219" stroke="#3a3c44" stroke-width="0.7" opacity=".35"/><path d="M389.6 181 L389.6 219" stroke="#3a3c44" stroke-width="0.7" opacity=".35"/><path d="M401.3 181 L401.3 219" stroke="#3a3c44" stroke-width="0.7" opacity=".35"/><path d="M411.3 181 L411.3 219" stroke="#3a3c44" stroke-width="0.7" opacity=".35"/><path d="M421.8 181 L421.8 219" stroke="#3a3c44" stroke-width="0.7" opacity=".35"/><rect x="362.4" y="84.6" width="72.6" height="97.7" fill="#fbfbfb"/><path d="M378.5 85 L378.5 182.3" stroke="#606060" stroke-width="0.9"/><path d="M389.5 85 L389.5 182.3" stroke="#606060" stroke-width="0.9"/><path d="M401.5 85 L401.5 182.3" stroke="#606060" stroke-width="0.9"/><path d="M411.5 85 L411.5 182.3" stroke="#606060" stroke-width="0.9"/><path d="M421.5 85 L421.5 182.3" stroke="#606060" stroke-width="0.9"/><path d="M362.4 87.5 L435 87.5" stroke="#777" stroke-width="0.8"/><path d="M362.4 113.5 L435 113.5" stroke="#777" stroke-width="0.8"/><path d="M362.4 150.5 L435 150.5" stroke="#777" stroke-width="0.8"/><path d="M362.4 166.5 L435 166.5" stroke="#777" stroke-width="0.8"/><path d="M382.5 86 L385.5 86" stroke="#e8a0a0" stroke-width="0.6"/><path d="M393.5 86 L396.5 86" stroke="#e8a0a0" stroke-width="0.6"/><path d="M405.5 86 L407.5 86" stroke="#e8a0a0" stroke-width="0.6"/><path d="M415.5 86 L417.5 86" stroke="#e8a0a0" stroke-width="0.6"/><path d="M425.5 86 L428.5 86" stroke="#e8a0a0" stroke-width="0.6"/><path d="M363.6 89.2 L371.6 89.2" stroke="#bcbcbc" stroke-width="0.7"/><path d="M381.4 89.2 L388.8 89.2" stroke="#cdcdcd" stroke-width="0.7"/><path d="M394.4 89.2 L400.6 89.2" stroke="#cdcdcd" stroke-width="0.7"/><path d="M402.1 89.2 L406.4 89.2" stroke="#c4c4c4" stroke-width="0.7"/><path d="M412.1 89.2 L419.3 89.2" stroke="#c4c4c4" stroke-width="0.7"/><path d="M363.6 91.3 L370.5 91.3" stroke="#cdcdcd" stroke-width="0.7"/><path d="M381.5 91.3 L388.8 91.3" stroke="#c4c4c4" stroke-width="0.7"/><path d="M396.1 91.3 L400.6 91.3" stroke="#cdcdcd" stroke-width="0.7"/><path d="M412.1 91.3 L416.8 91.3" stroke="#cdcdcd" stroke-width="0.7"/><path d="M363.6 93.4 L370.1 93.4" stroke="#bcbcbc" stroke-width="0.7"/><path d="M383.5 93.4 L388.8 93.4" stroke="#c4c4c4" stroke-width="0.7"/><path d="M395.4 93.4 L400.6 93.4" stroke="#cdcdcd" stroke-width="0.7"/><path d="M412.1 93.4 L417.8 93.4" stroke="#c4c4c4" stroke-width="0.7"/><path d="M380.9 95.5 L388.8 95.5" stroke="#c4c4c4" stroke-width="0.7"/><path d="M392.3 95.5 L400.6 95.5" stroke="#c4c4c4" stroke-width="0.7"/><path d="M363.6 97.6 L370.8 97.6" stroke="#d6d6d6" stroke-width="0.7"/><path d="M384.0 97.6 L388.8 97.6" stroke="#c4c4c4" stroke-width="0.7"/><path d="M412.1 97.6 L416.4 97.6" stroke="#c4c4c4" stroke-width="0.7"/><path d="M427.4 97.6 L434.2 97.6" stroke="#bcbcbc" stroke-width="0.7"/><path d="M363.6 99.7 L368.9 99.7" stroke="#cdcdcd" stroke-width="0.7"/><path d="M394.9 99.7 L400.6 99.7" stroke="#bcbcbc" stroke-width="0.7"/><path d="M402.1 99.7 L406.9 99.7" stroke="#cdcdcd" stroke-width="0.7"/><path d="M412.1 99.7 L419.2 99.7" stroke="#d6d6d6" stroke-width="0.7"/><path d="M363.6 101.8 L372.0 101.8" stroke="#c4c4c4" stroke-width="0.7"/><path d="M384.8 101.8 L388.8 101.8" stroke="#bcbcbc" stroke-width="0.7"/><path d="M393.1 101.8 L400.6 101.8" stroke="#d6d6d6" stroke-width="0.7"/><path d="M412.1 101.8 L415.6 101.8" stroke="#cdcdcd" stroke-width="0.7"/><path d="M363.6 103.9 L368.5 103.9" stroke="#bcbcbc" stroke-width="0.7"/><path d="M382.7 103.9 L388.8 103.9" stroke="#cdcdcd" stroke-width="0.7"/><path d="M396.1 103.9 L400.6 103.9" stroke="#cdcdcd" stroke-width="0.7"/><path d="M412.1 103.9 L418.1 103.9" stroke="#cdcdcd" stroke-width="0.7"/><path d="M426.5 103.9 L434.2 103.9" stroke="#cdcdcd" stroke-width="0.7"/><path d="M363.6 106.0 L369.1 106.0" stroke="#c4c4c4" stroke-width="0.7"/><path d="M385.0 106.0 L388.8 106.0" stroke="#c4c4c4" stroke-width="0.7"/><path d="M395.7 106.0 L400.6 106.0" stroke="#bcbcbc" stroke-width="0.7"/><path d="M412.1 106.0 L418.0 106.0" stroke="#d6d6d6" stroke-width="0.7"/><path d="M394.6 108.1 L400.6 108.1" stroke="#c4c4c4" stroke-width="0.7"/><path d="M430.0 108.1 L434.2 108.1" stroke="#d6d6d6" stroke-width="0.7"/><path d="M363.6 110.2 L366.7 110.2" stroke="#d6d6d6" stroke-width="0.7"/><path d="M382.8 110.2 L388.8 110.2" stroke="#cdcdcd" stroke-width="0.7"/><path d="M396.3 110.2 L400.6 110.2" stroke="#bcbcbc" stroke-width="0.7"/><path d="M412.1 110.2 L418.4 110.2" stroke="#cdcdcd" stroke-width="0.7"/><path d="M383.8 115.0 L388.8 115.0" stroke="#d6d6d6" stroke-width="0.7"/><path d="M402.1 115.0 L407.8 115.0" stroke="#bcbcbc" stroke-width="0.7"/><path d="M412.1 115.0 L416.7 115.0" stroke="#cdcdcd" stroke-width="0.7"/><path d="M363.6 117.1 L370.5 117.1" stroke="#cdcdcd" stroke-width="0.7"/><path d="M381.1 117.1 L388.8 117.1" stroke="#d6d6d6" stroke-width="0.7"/><path d="M394.6 117.1 L400.6 117.1" stroke="#c4c4c4" stroke-width="0.7"/><path d="M412.1 117.1 L418.9 117.1" stroke="#bcbcbc" stroke-width="0.7"/><path d="M363.6 119.2 L369.7 119.2" stroke="#c4c4c4" stroke-width="0.7"/><path d="M382.4 119.2 L388.8 119.2" stroke="#d6d6d6" stroke-width="0.7"/><path d="M393.3 119.2 L400.6 119.2" stroke="#bcbcbc" stroke-width="0.7"/><path d="M412.1 119.2 L417.4 119.2" stroke="#bcbcbc" stroke-width="0.7"/><path d="M363.6 121.3 L366.6 121.3" stroke="#c4c4c4" stroke-width="0.7"/><path d="M384.4 121.3 L388.8 121.3" stroke="#c4c4c4" stroke-width="0.7"/><path d="M393.9 121.3 L400.6 121.3" stroke="#bcbcbc" stroke-width="0.7"/><path d="M412.1 121.3 L416.7 121.3" stroke="#cdcdcd" stroke-width="0.7"/><path d="M381.1 123.4 L388.8 123.4" stroke="#bcbcbc" stroke-width="0.7"/><path d="M395.4 123.4 L400.6 123.4" stroke="#d6d6d6" stroke-width="0.7"/><path d="M412.1 123.4 L419.0 123.4" stroke="#cdcdcd" stroke-width="0.7"/><path d="M363.6 125.5 L368.2 125.5" stroke="#cdcdcd" stroke-width="0.7"/><path d="M383.8 125.5 L388.8 125.5" stroke="#c4c4c4" stroke-width="0.7"/><path d="M392.2 125.5 L400.6 125.5" stroke="#d6d6d6" stroke-width="0.7"/><path d="M412.1 125.5 L417.4 125.5" stroke="#cdcdcd" stroke-width="0.7"/><path d="M363.6 127.6 L370.2 127.6" stroke="#bcbcbc" stroke-width="0.7"/><path d="M381.5 127.6 L388.8 127.6" stroke="#d6d6d6" stroke-width="0.7"/><path d="M396.8 127.6 L400.6 127.6" stroke="#d6d6d6" stroke-width="0.7"/><path d="M412.1 127.6 L418.9 127.6" stroke="#c4c4c4" stroke-width="0.7"/><path d="M363.6 129.7 L370.7 129.7" stroke="#d6d6d6" stroke-width="0.7"/><path d="M384.8 129.7 L388.8 129.7" stroke="#c4c4c4" stroke-width="0.7"/><path d="M402.1 129.7 L405.5 129.7" stroke="#d6d6d6" stroke-width="0.7"/><path d="M363.6 131.8 L367.4 131.8" stroke="#c4c4c4" stroke-width="0.7"/><path d="M382.9 131.8 L388.8 131.8" stroke="#c4c4c4" stroke-width="0.7"/><path d="M395.6 131.8 L400.6 131.8" stroke="#d6d6d6" stroke-width="0.7"/><path d="M381.4 133.9 L388.8 133.9" stroke="#cdcdcd" stroke-width="0.7"/><path d="M392.3 133.9 L400.6 133.9" stroke="#bcbcbc" stroke-width="0.7"/><path d="M402.1 133.9 L407.0 133.9" stroke="#c4c4c4" stroke-width="0.7"/><path d="M412.1 133.9 L417.9 133.9" stroke="#d6d6d6" stroke-width="0.7"/><path d="M363.6 136.0 L370.4 136.0" stroke="#c4c4c4" stroke-width="0.7"/><path d="M381.2 136.0 L388.8 136.0" stroke="#c4c4c4" stroke-width="0.7"/><path d="M412.1 136.0 L416.7 136.0" stroke="#c4c4c4" stroke-width="0.7"/><path d="M429.7 136.0 L434.2 136.0" stroke="#bcbcbc" stroke-width="0.7"/><path d="M363.6 138.1 L367.9 138.1" stroke="#c4c4c4" stroke-width="0.7"/><path d="M381.4 138.1 L388.8 138.1" stroke="#bcbcbc" stroke-width="0.7"/><path d="M396.1 138.1 L400.6 138.1" stroke="#d6d6d6" stroke-width="0.7"/><path d="M393.6 140.2 L400.6 140.2" stroke="#bcbcbc" stroke-width="0.7"/><path d="M412.1 140.2 L419.6 140.2" stroke="#c4c4c4" stroke-width="0.7"/><path d="M363.6 142.3 L371.1 142.3" stroke="#cdcdcd" stroke-width="0.7"/><path d="M381.5 142.3 L388.8 142.3" stroke="#d6d6d6" stroke-width="0.7"/><path d="M395.1 142.3 L400.6 142.3" stroke="#cdcdcd" stroke-width="0.7"/><path d="M412.1 142.3 L417.8 142.3" stroke="#d6d6d6" stroke-width="0.7"/><path d="M363.6 144.4 L369.2 144.4" stroke="#bcbcbc" stroke-width="0.7"/><path d="M380.9 144.4 L388.8 144.4" stroke="#bcbcbc" stroke-width="0.7"/><path d="M392.0 144.4 L400.6 144.4" stroke="#c4c4c4" stroke-width="0.7"/><path d="M412.1 144.4 L415.6 144.4" stroke="#bcbcbc" stroke-width="0.7"/><path d="M394.6 146.5 L400.6 146.5" stroke="#cdcdcd" stroke-width="0.7"/><path d="M385.0 148.6 L388.8 148.6" stroke="#bcbcbc" stroke-width="0.7"/><path d="M392.3 148.6 L400.6 148.6" stroke="#cdcdcd" stroke-width="0.7"/><path d="M429.2 148.6 L434.2 148.6" stroke="#c4c4c4" stroke-width="0.7"/><path d="M363.6 153.4 L368.4 153.4" stroke="#bcbcbc" stroke-width="0.7"/><path d="M382.0 153.4 L388.8 153.4" stroke="#c4c4c4" stroke-width="0.7"/><path d="M393.9 153.4 L400.6 153.4" stroke="#cdcdcd" stroke-width="0.7"/><path d="M426.5 153.4 L434.2 153.4" stroke="#cdcdcd" stroke-width="0.7"/><path d="M363.6 155.5 L369.4 155.5" stroke="#cdcdcd" stroke-width="0.7"/><path d="M381.4 155.5 L388.8 155.5" stroke="#cdcdcd" stroke-width="0.7"/><path d="M393.3 155.5 L400.6 155.5" stroke="#d6d6d6" stroke-width="0.7"/><path d="M412.1 155.5 L416.7 155.5" stroke="#cdcdcd" stroke-width="0.7"/><path d="M424.3 155.5 L434.2 155.5" stroke="#c4c4c4" stroke-width="0.7"/><path d="M363.6 157.6 L370.5 157.6" stroke="#d6d6d6" stroke-width="0.7"/><path d="M383.4 157.6 L388.8 157.6" stroke="#bcbcbc" stroke-width="0.7"/><path d="M393.4 157.6 L400.6 157.6" stroke="#cdcdcd" stroke-width="0.7"/><path d="M412.1 157.6 L415.4 157.6" stroke="#cdcdcd" stroke-width="0.7"/><path d="M363.6 159.7 L368.4 159.7" stroke="#d6d6d6" stroke-width="0.7"/><path d="M382.2 159.7 L388.8 159.7" stroke="#cdcdcd" stroke-width="0.7"/><path d="M394.6 159.7 L400.6 159.7" stroke="#c4c4c4" stroke-width="0.7"/><path d="M402.1 159.7 L407.4 159.7" stroke="#bcbcbc" stroke-width="0.7"/><path d="M412.1 159.7 L416.1 159.7" stroke="#cdcdcd" stroke-width="0.7"/><path d="M429.2 159.7 L434.2 159.7" stroke="#d6d6d6" stroke-width="0.7"/><path d="M385.2 161.8 L388.8 161.8" stroke="#bcbcbc" stroke-width="0.7"/><path d="M396.5 161.8 L400.6 161.8" stroke="#bcbcbc" stroke-width="0.7"/><path d="M412.1 161.8 L417.2 161.8" stroke="#d6d6d6" stroke-width="0.7"/><path d="M426.1 161.8 L434.2 161.8" stroke="#cdcdcd" stroke-width="0.7"/><path d="M363.6 163.9 L370.5 163.9" stroke="#bcbcbc" stroke-width="0.7"/><path d="M396.5 163.9 L400.6 163.9" stroke="#c4c4c4" stroke-width="0.7"/><path d="M412.1 163.9 L419.1 163.9" stroke="#bcbcbc" stroke-width="0.7"/><path d="M363.6 168.8 L368.3 168.8" stroke="#d6d6d6" stroke-width="0.7"/><path d="M384.9 168.8 L388.8 168.8" stroke="#cdcdcd" stroke-width="0.7"/><path d="M395.0 168.8 L400.6 168.8" stroke="#d6d6d6" stroke-width="0.7"/><path d="M412.1 168.8 L418.8 168.8" stroke="#cdcdcd" stroke-width="0.7"/><path d="M363.6 170.9 L368.3 170.9" stroke="#bcbcbc" stroke-width="0.7"/><path d="M381.3 170.9 L388.8 170.9" stroke="#c4c4c4" stroke-width="0.7"/><path d="M392.2 170.9 L400.6 170.9" stroke="#d6d6d6" stroke-width="0.7"/><path d="M412.1 170.9 L417.9 170.9" stroke="#c4c4c4" stroke-width="0.7"/><path d="M382.1 173.0 L388.8 173.0" stroke="#bcbcbc" stroke-width="0.7"/><path d="M402.1 173.0 L407.7 173.0" stroke="#cdcdcd" stroke-width="0.7"/><path d="M412.1 173.0 L417.1 173.0" stroke="#c4c4c4" stroke-width="0.7"/><path d="M363.6 175.1 L367.8 175.1" stroke="#d6d6d6" stroke-width="0.7"/><path d="M394.4 175.1 L400.6 175.1" stroke="#c4c4c4" stroke-width="0.7"/><path d="M412.1 175.1 L415.6 175.1" stroke="#c4c4c4" stroke-width="0.7"/><path d="M380.9 177.2 L388.8 177.2" stroke="#bcbcbc" stroke-width="0.7"/><path d="M394.0 177.2 L400.6 177.2" stroke="#bcbcbc" stroke-width="0.7"/><path d="M412.1 177.2 L417.7 177.2" stroke="#d6d6d6" stroke-width="0.7"/><path d="M363.6 179.3 L369.5 179.3" stroke="#d6d6d6" stroke-width="0.7"/><path d="M381.9 179.3 L388.8 179.3" stroke="#c4c4c4" stroke-width="0.7"/><path d="M395.8 179.3 L400.6 179.3" stroke="#c4c4c4" stroke-width="0.7"/><path d="M412.1 179.3 L418.4 179.3" stroke="#c4c4c4" stroke-width="0.7"/><path d="M363.6 181.4 L371.9 181.4" stroke="#d6d6d6" stroke-width="0.7"/><path d="M381.2 181.4 L388.8 181.4" stroke="#bcbcbc" stroke-width="0.7"/><path d="M395.8 181.4 L400.6 181.4" stroke="#cdcdcd" stroke-width="0.7"/><path d="M402.1 181.4 L405.5 181.4" stroke="#bcbcbc" stroke-width="0.7"/><path d="M412.1 181.4 L419.7 181.4" stroke="#cdcdcd" stroke-width="0.7"/><path d="M364 88.5 L366.5 88.5" stroke="#7a8ed8" stroke-width="0.9"/><path d="M385 88.5 L387.5 88.5" stroke="#7a8ed8" stroke-width="0.9"/><path d="M396 88.5 L398.5 88.5" stroke="#7a8ed8" stroke-width="0.9"/><path d="M408 88.5 L410.5 88.5" stroke="#7a8ed8" stroke-width="0.9"/><path d="M431 88.5 L433.5 88.5" stroke="#7a8ed8" stroke-width="0.9"/><path d="M364 114 L366.5 114" stroke="#7a8ed8" stroke-width="0.9"/><path d="M386 114 L388.5 114" stroke="#7a8ed8" stroke-width="0.9"/><path d="M397 114 L399.5 114" stroke="#7a8ed8" stroke-width="0.9"/><path d="M408 114 L410.5 114" stroke="#7a8ed8" stroke-width="0.9"/><path d="M432 114 L434.5 114" stroke="#7a8ed8" stroke-width="0.9"/><path d="M364 152.5 L366.5 152.5" stroke="#7a8ed8" stroke-width="0.9"/><path d="M386 152.5 L388.5 152.5" stroke="#7a8ed8" stroke-width="0.9"/><path d="M432 152.5 L434.5 152.5" stroke="#7a8ed8" stroke-width="0.9"/><path d="M364 168 L366.5 168" stroke="#7a8ed8" stroke-width="0.9"/><path d="M386 168 L388.5 168" stroke="#7a8ed8" stroke-width="0.9"/><path d="M432 168 L434.5 168" stroke="#7a8ed8" stroke-width="0.9"/><text x="398.8" y="199.4" font-family="Liberation Sans" font-size="11.3" fill="#000" opacity=".45" text-anchor="middle" textLength="66.5" lengthAdjust="spacingAndGlyphs" dy="0.8">Population.xls</text><text x="398.8" y="199.4" font-family="Liberation Sans" font-size="11.3" fill="#fff" stroke="#fff" stroke-width="0.3" text-anchor="middle" textLength="66.5" lengthAdjust="spacingAndGlyphs">Population.xls</text><rect x="392.1" y="209.5" width="12.6" height="4.7" rx="0.8" fill="#b4b6bc" stroke="#7d8088" stroke-width="0.5"/><path d="M393 211 L403.6 211 M393 212.4 L403.6 212.4" stroke="#c4c5c8" stroke-width="0.5"/></svg>
<div id="header"></div>
<div style="left:144px;top:219px;width:260px;height:13px;background:linear-gradient(#d8eafb,#bddcf8 42%,#8ec3f1 52%,#9fcdf4);border-right:1px solid #7fa9d6;border-bottom:1px solid #80b0de"></div>
<div style="left:549.5px;top:221px;width:1px;height:9px;background:#c9c9c9"></div>
<div style="left:628.3px;top:221px;width:1px;height:9px;background:#c9c9c9"></div>
<svg style="left:144px;top:219px" width="510" height="233" viewBox="144 219 510 233"><defs><linearGradient id="lf" x1="0" y1="0" x2="0" y2="1"><stop offset="0" stop-color="#c4dbee"/><stop offset="1" stop-color="#84afd5"/></linearGradient></defs><text x="183.1" y="229.5" font-family="Liberation Sans" font-size="10.4" fill="#1a1a1a" stroke="#1a1a1a" stroke-width="0.18" textLength="21.8" lengthAdjust="spacing" text-anchor="start">Nom</text><path d="M395.2 227.8 L398.2 223.2 L401.2 227.8 Z" fill="#5a87bd"/><text x="415.6" y="229.5" font-family="Liberation Sans" font-size="10.4" fill="#1a1a1a" stroke="#1a1a1a" stroke-width="0.18" textLength="98" lengthAdjust="spacing" text-anchor="start">Date de modification</text><text x="590.3" y="229.5" font-family="Liberation Sans" font-size="10.4" fill="#1a1a1a" stroke="#1a1a1a" stroke-width="0.18" textLength="24.6" lengthAdjust="spacing" text-anchor="start">Taille</text><text x="640.2" y="229.5" font-family="Liberation Sans" font-size="10.4" fill="#1a1a1a" stroke="#1a1a1a" stroke-width="0.18" textLength="24" lengthAdjust="spacing" text-anchor="start">Type</text><rect x="144" y="247.72" width="510" height="15.42" fill="#f2f5fa"/><rect x="144" y="278.56" width="510" height="15.42" fill="#f2f5fa"/><rect x="144" y="293.98" width="510" height="15.42" fill="#3875d7"/><rect x="144" y="309.40" width="510" height="15.42" fill="#f2f5fa"/><rect x="144" y="340.24" width="510" height="15.42" fill="#f2f5fa"/><rect x="144" y="371.08" width="510" height="15.42" fill="#f2f5fa"/><rect x="144" y="401.92" width="510" height="15.42" fill="#f2f5fa"/><rect x="144" y="432.76" width="510" height="15.42" fill="#f2f5fa"/><path d="M150.60 236.30 L157.80 236.30 L154.20 242.40 Z" fill="#777"/><path d="M165.0 235.5 Q165.0 234.0 166.0 234.0 L169.6 234.0 Q170.4 234.0 170.8 235.0 L171.1 235.8 L177.0 235.8 Q178.0 235.8 178.0 236.8 L178.0 244.6 Q178.0 245.2 177.4 245.2 L165.6 245.2 Q165.0 245.2 165.0 244.6 Z" fill="url(#lf)" stroke="#6f9bc2" stroke-width="0.75"/><rect x="165.5" y="236.6" width="12" height="0.8" fill="#e3eef8" opacity=".8"/><text x="183.0" y="243.5" font-family="Liberation Sans" font-size="10.4" fill="#151515" stroke="#151515" stroke-width="0.18" textLength="40.2" lengthAdjust="spacing" text-anchor="start">Archives</text><text x="415.8" y="243.5" font-family="Liberation Sans" font-size="10.4" fill="#151515" stroke="#151515" stroke-width="0.18" textLength="90.1" lengthAdjust="spacing" text-anchor="start">14 mai 2012 23:54</text><text x="617" y="243.50" font-family="Liberation Sans" font-size="10.4" fill="#555" stroke="#555" stroke-width="0.15" text-anchor="end" textLength="11" lengthAdjust="spacingAndGlyphs">--</text><text x="640.2" y="243.50" font-family="Liberation Sans" font-size="10.4" fill="#151515" stroke="#151515" stroke-width="0.22">Dossier</text><path d="M168.50 251.32 L175.00 255.42 L168.50 259.52 Z" fill="#777"/><path d="M182.2 250.92 Q182.2 249.42 183.2 249.42 L186.79999999999998 249.42 Q187.6 249.42 188.0 250.42 L188.29999999999998 251.22 L194.2 251.22 Q195.2 251.22 195.2 252.22 L195.2 260.02 Q195.2 260.62 194.6 260.62 L182.79999999999998 260.62 Q182.2 260.62 182.2 260.02 Z" fill="url(#lf)" stroke="#6f9bc2" stroke-width="0.75"/><rect x="182.7" y="252.01999999999998" width="12" height="0.8" fill="#e3eef8" opacity=".8"/><text x="200.2" y="258.92" font-family="Liberation Sans" font-size="10.4" fill="#151515" stroke="#151515" stroke-width="0.18" textLength="26.9" lengthAdjust="spacingAndGlyphs" text-anchor="start">CROC</text><text x="415.8" y="258.92" font-family="Liberation Sans" font-size="10.4" fill="#151515" stroke="#151515" stroke-width="0.18" textLength="91.9" lengthAdjust="spacing" text-anchor="start">15 déc. 2011 19:52</text><text x="617" y="258.92" font-family="Liberation Sans" font-size="10.4" fill="#555" stroke="#555" stroke-width="0.15" text-anchor="end" textLength="11" lengthAdjust="spacingAndGlyphs">--</text><text x="640.2" y="258.92" font-family="Liberation Sans" font-size="10.4" fill="#151515" stroke="#151515" stroke-width="0.22">Dossier</text><path d="M168.50 266.74 L175.00 270.84 L168.50 274.94 Z" fill="#777"/><path d="M182.2 266.34 Q182.2 264.84 183.2 264.84 L186.79999999999998 264.84 Q187.6 264.84 188.0 265.84 L188.29999999999998 266.64 L194.2 266.64 Q195.2 266.64 195.2 267.64 L195.2 275.44 Q195.2 276.03999999999996 194.6 276.03999999999996 L182.79999999999998 276.03999999999996 Q182.2 276.03999999999996 182.2 275.44 Z" fill="url(#lf)" stroke="#6f9bc2" stroke-width="0.75"/><rect x="182.7" y="267.44" width="12" height="0.8" fill="#e3eef8" opacity=".8"/><text x="200.2" y="274.34" font-family="Liberation Sans" font-size="10.4" fill="#151515" stroke="#151515" stroke-width="0.18" textLength="36.4" lengthAdjust="spacing" text-anchor="start">Histoire</text><text x="415.8" y="274.34" font-family="Liberation Sans" font-size="10.4" fill="#151515" stroke="#151515" stroke-width="0.18" textLength="91.9" lengthAdjust="spacing" text-anchor="start">15 déc. 2011 19:52</text><text x="617" y="274.34" font-family="Liberation Sans" font-size="10.4" fill="#555" stroke="#555" stroke-width="0.15" text-anchor="end" textLength="11" lengthAdjust="spacingAndGlyphs">--</text><text x="640.2" y="274.34" font-family="Liberation Sans" font-size="10.4" fill="#151515" stroke="#151515" stroke-width="0.22">Dossier</text><path d="M168.50 282.16 L175.00 286.26 L168.50 290.36 Z" fill="#777"/><path d="M182.2 281.76 Q182.2 280.26 183.2 280.26 L186.79999999999998 280.26 Q187.6 280.26 188.0 281.26 L188.29999999999998 282.06 L194.2 282.06 Q195.2 282.06 195.2 283.06 L195.2 290.86 Q195.2 291.46 194.6 291.46 L182.79999999999998 291.46 Q182.2 291.46 182.2 290.86 Z" fill="url(#lf)" stroke="#6f9bc2" stroke-width="0.75"/><rect x="182.7" y="282.86" width="12" height="0.8" fill="#e3eef8" opacity=".8"/><text x="200.2" y="289.76" font-family="Liberation Sans" font-size="10.4" fill="#151515" stroke="#151515" stroke-width="0.18" textLength="101.6" lengthAdjust="spacingAndGlyphs" text-anchor="start">LovelyMac &amp; MacSlate</text><text x="415.8" y="289.76" font-family="Liberation Sans" font-size="10.4" fill="#151515" stroke="#151515" stroke-width="0.18" textLength="91.9" lengthAdjust="spacing" text-anchor="start">15 déc. 2011 19:52</text><text x="617" y="289.76" font-family="Liberation Sans" font-size="10.4" fill="#555" stroke="#555" stroke-width="0.15" text-anchor="end" textLength="11" lengthAdjust="spacingAndGlyphs">--</text><text x="640.2" y="289.76" font-family="Liberation Sans" font-size="10.4" fill="#151515" stroke="#151515" stroke-width="0.22">Dossier</text><path d="M184.40 295.48 L190.60 295.48 L193.20 298.08 L193.20 306.98 L184.40 306.98 Z" fill="#fbfbfb" stroke="#a0a0a0" stroke-width="0.7"/><path d="M184.40 295.48 L190.60 295.48 L191.60 296.48 L191.60 297.68 L184.40 297.68 Z" fill="#46c23c"/><path d="M186.00 299.48 L186.00 305.98 M185.40 300.48 L192.00 300.48" stroke="#d0d0d0" stroke-width="0.5"/><text x="200.2" y="305.18" font-family="Liberation Sans" font-size="10.4" fill="#fff" stroke="#fff" stroke-width="0.18" textLength="66.9" lengthAdjust="spacing" text-anchor="start">Population.xls</text><text x="415.8" y="305.18" font-family="Liberation Sans" font-size="10.4" fill="#fff" stroke="#fff" stroke-width="0.18" textLength="90.4" lengthAdjust="spacing" text-anchor="start">9 mars 2005 22:47</text><text x="617.2" y="305.18" font-family="Liberation Sans" font-size="10.4" fill="#fff" stroke="#fff" stroke-width="0.22" text-anchor="end" textLength="25.5" lengthAdjust="spacingAndGlyphs">39 Ko</text><text x="640.2" y="305.18" font-family="Liberation Sans" font-size="10.4" fill="#fff" stroke="#fff" stroke-width="0.22">Classeur</text><path d="M184.40 310.90 L190.60 310.90 L193.20 313.50 L193.20 322.40 L184.40 322.40 Z" fill="#fbfbfb" stroke="#a0a0a0" stroke-width="0.7"/><path d="M184.40 310.90 L190.60 310.90 L191.60 311.90 L191.60 313.10 L184.40 313.10 Z" fill="#46c23c"/><path d="M186.00 314.90 L186.00 321.40 M185.40 315.90 L192.00 315.90" stroke="#d0d0d0" stroke-width="0.5"/><text x="200.2" y="320.6" font-family="Liberation Sans" font-size="10.4" fill="#151515" stroke="#151515" stroke-width="0.18" textLength="100.5" lengthAdjust="spacing" text-anchor="start">Volemon-Tournoi.xls</text><text x="415.8" y="320.6" font-family="Liberation Sans" font-size="10.4" fill="#151515" stroke="#151515" stroke-width="0.18" textLength="90.1" lengthAdjust="spacing" text-anchor="start">14 mai 2012 23:43</text><text x="617.2" y="320.60" font-family="Liberation Sans" font-size="10.4" fill="#151515" stroke="#151515" stroke-width="0.22" text-anchor="end" textLength="25.5" lengthAdjust="spacingAndGlyphs">13 Ko</text><text x="640.2" y="320.60" font-family="Liberation Sans" font-size="10.4" fill="#151515" stroke="#151515" stroke-width="0.22">Classeur</text><path d="M151.30 328.42 L157.80 332.52 L151.30 336.62 Z" fill="#777"/><path d="M165.0 328.02 Q165.0 326.52 166.0 326.52 L169.6 326.52 Q170.4 326.52 170.8 327.52 L171.1 328.32 L177.0 328.32 Q178.0 328.32 178.0 329.32 L178.0 337.12 Q178.0 337.71999999999997 177.4 337.71999999999997 L165.6 337.71999999999997 Q165.0 337.71999999999997 165.0 337.12 Z" fill="url(#lf)" stroke="#6f9bc2" stroke-width="0.75"/><rect x="165.5" y="329.12" width="12" height="0.8" fill="#e3eef8" opacity=".8"/><text x="183.0" y="336.02" font-family="Liberation Sans" font-size="10.4" fill="#151515" stroke="#151515" stroke-width="0.18" textLength="73.5" lengthAdjust="spacing" text-anchor="start">Développement</text><text x="415.8" y="336.02" font-family="Liberation Sans" font-size="10.4" fill="#151515" stroke="#151515" stroke-width="0.18" textLength="93.6" lengthAdjust="spacing" text-anchor="start">19 nov. 2012 17:07</text><text x="617" y="336.02" font-family="Liberation Sans" font-size="10.4" fill="#555" stroke="#555" stroke-width="0.15" text-anchor="end" textLength="11" lengthAdjust="spacingAndGlyphs">--</text><text x="640.2" y="336.02" font-family="Liberation Sans" font-size="10.4" fill="#151515" stroke="#151515" stroke-width="0.22">Dossier</text><path d="M151.30 343.84 L157.80 347.94 L151.30 352.04 Z" fill="#777"/><path d="M165.0 343.44 Q165.0 341.94 166.0 341.94 L169.6 341.94 Q170.4 341.94 170.8 342.94 L171.1 343.74 L177.0 343.74 Q178.0 343.74 178.0 344.74 L178.0 352.54 Q178.0 353.14 177.4 353.14 L165.6 353.14 Q165.0 353.14 165.0 352.54 Z" fill="url(#lf)" stroke="#6f9bc2" stroke-width="0.75"/><rect x="165.5" y="344.54" width="12" height="0.8" fill="#e3eef8" opacity=".8"/><text x="183.0" y="351.44" font-family="Liberation Sans" font-size="10.4" fill="#151515" stroke="#151515" stroke-width="0.18" textLength="29.1" lengthAdjust="spacingAndGlyphs" text-anchor="start">Divers</text><text x="415.8" y="351.44" font-family="Liberation Sans" font-size="10.4" fill="#151515" stroke="#151515" stroke-width="0.18" textLength="91" lengthAdjust="spacing" text-anchor="start">21 oct. 2012 19:44</text><text x="617" y="351.44" font-family="Liberation Sans" font-size="10.4" fill="#555" stroke="#555" stroke-width="0.15" text-anchor="end" textLength="11" lengthAdjust="spacingAndGlyphs">--</text><text x="640.2" y="351.44" font-family="Liberation Sans" font-size="10.4" fill="#151515" stroke="#151515" stroke-width="0.22">Dossier</text><path d="M151.30 359.26 L157.80 363.36 L151.30 367.46 Z" fill="#777"/><path d="M165.0 358.86 Q165.0 357.36 166.0 357.36 L169.6 357.36 Q170.4 357.36 170.8 358.36 L171.1 359.16 L177.0 359.16 Q178.0 359.16 178.0 360.16 L178.0 367.96000000000004 Q178.0 368.56 177.4 368.56 L165.6 368.56 Q165.0 368.56 165.0 367.96000000000004 Z" fill="url(#lf)" stroke="#6f9bc2" stroke-width="0.75"/><rect x="165.5" y="359.96000000000004" width="12" height="0.8" fill="#e3eef8" opacity=".8"/><text x="183.0" y="366.86" font-family="Liberation Sans" font-size="10.4" fill="#151515" stroke="#151515" stroke-width="0.18" textLength="143.9" lengthAdjust="spacing" text-anchor="start">Données utilisateurs Microsoft</text><text x="415.8" y="366.86" font-family="Liberation Sans" font-size="10.4" fill="#151515" stroke="#151515" stroke-width="0.18" textLength="90.6" lengthAdjust="spacing" text-anchor="start">26 mai 2012 20:33</text><text x="617" y="366.86" font-family="Liberation Sans" font-size="10.4" fill="#555" stroke="#555" stroke-width="0.15" text-anchor="end" textLength="11" lengthAdjust="spacingAndGlyphs">--</text><text x="640.2" y="366.86" font-family="Liberation Sans" font-size="10.4" fill="#151515" stroke="#151515" stroke-width="0.22">Dossier</text><path d="M151.30 374.68 L157.80 378.78 L151.30 382.88 Z" fill="#777"/><path d="M167.0 379.08000000000004 L176.0 379.08000000000004" stroke="#b8b8b8" stroke-width="0.8"/><text x="183.0" y="382.28" font-family="Liberation Sans" font-size="10.4" fill="#151515" stroke="#151515" stroke-width="0.18" textLength="42.2" lengthAdjust="spacingAndGlyphs" text-anchor="start">ENSIMAG</text><text x="415.8" y="382.28" font-family="Liberation Sans" font-size="10.4" fill="#151515" stroke="#151515" stroke-width="0.18" textLength="93.6" lengthAdjust="spacing" text-anchor="start">16 nov. 2012 19:31</text><text x="617" y="382.28" font-family="Liberation Sans" font-size="10.4" fill="#555" stroke="#555" stroke-width="0.15" text-anchor="end" textLength="11" lengthAdjust="spacingAndGlyphs">--</text><text x="640.2" y="382.28" font-family="Liberation Sans" font-size="10.4" fill="#151515" stroke="#151515" stroke-width="0.22">Dossier</text><path d="M151.30 390.10 L157.80 394.20 L151.30 398.30 Z" fill="#777"/><path d="M165.0 389.7 Q165.0 388.2 166.0 388.2 L169.6 388.2 Q170.4 388.2 170.8 389.2 L171.1 390.0 L177.0 390.0 Q178.0 390.0 178.0 391.0 L178.0 398.8 Q178.0 399.4 177.4 399.4 L165.6 399.4 Q165.0 399.4 165.0 398.8 Z" fill="url(#lf)" stroke="#6f9bc2" stroke-width="0.75"/><rect x="165.5" y="390.8" width="12" height="0.8" fill="#e3eef8" opacity=".8"/><text x="183.0" y="397.7" font-family="Liberation Sans" font-size="10.4" fill="#151515" stroke="#151515" stroke-width="0.18" textLength="36" lengthAdjust="spacing" text-anchor="start">Gestion</text><text x="415.8" y="397.7" font-family="Liberation Sans" font-size="10.4" fill="#151515" stroke="#151515" stroke-width="0.18" textLength="96.5" lengthAdjust="spacing" text-anchor="start">24 sept. 2012 19:34</text><text x="617" y="397.70" font-family="Liberation Sans" font-size="10.4" fill="#555" stroke="#555" stroke-width="0.15" text-anchor="end" textLength="11" lengthAdjust="spacingAndGlyphs">--</text><text x="640.2" y="397.70" font-family="Liberation Sans" font-size="10.4" fill="#151515" stroke="#151515" stroke-width="0.22">Dossier</text><path d="M151.30 405.52 L157.80 409.62 L151.30 413.72 Z" fill="#777"/><path d="M165.0 405.12 Q165.0 403.62 166.0 403.62 L169.6 403.62 Q170.4 403.62 170.8 404.62 L171.1 405.42 L177.0 405.42 Q178.0 405.42 178.0 406.42 L178.0 414.22 Q178.0 414.82 177.4 414.82 L165.6 414.82 Q165.0 414.82 165.0 414.22 Z" fill="url(#lf)" stroke="#6f9bc2" stroke-width="0.75"/><rect x="165.5" y="406.22" width="12" height="0.8" fill="#e3eef8" opacity=".8"/><text x="183.0" y="413.12" font-family="Liberation Sans" font-size="10.4" fill="#151515" stroke="#151515" stroke-width="0.18" textLength="20.5" lengthAdjust="spacingAndGlyphs" text-anchor="start">Jeux</text><text x="415.8" y="413.12" font-family="Liberation Sans" font-size="10.4" fill="#151515" stroke="#151515" stroke-width="0.18" textLength="90.6" lengthAdjust="spacing" text-anchor="start">27 mai 2012 00:15</text><text x="617" y="413.12" font-family="Liberation Sans" font-size="10.4" fill="#555" stroke="#555" stroke-width="0.15" text-anchor="end" textLength="11" lengthAdjust="spacingAndGlyphs">--</text><text x="640.2" y="413.12" font-family="Liberation Sans" font-size="10.4" fill="#151515" stroke="#151515" stroke-width="0.22">Dossier</text><path d="M151.30 420.94 L157.80 425.04 L151.30 429.14 Z" fill="#777"/><path d="M165.0 420.54 Q165.0 419.04 166.0 419.04 L169.6 419.04 Q170.4 419.04 170.8 420.04 L171.1 420.84000000000003 L177.0 420.84000000000003 Q178.0 420.84000000000003 178.0 421.84000000000003 L178.0 429.64000000000004 Q178.0 430.24 177.4 430.24 L165.6 430.24 Q165.0 430.24 165.0 429.64000000000004 Z" fill="url(#lf)" stroke="#6f9bc2" stroke-width="0.75"/><rect x="165.5" y="421.64000000000004" width="12" height="0.8" fill="#e3eef8" opacity=".8"/><text x="183.0" y="428.54" font-family="Liberation Sans" font-size="10.4" fill="#151515" stroke="#151515" stroke-width="0.18" textLength="22.1" lengthAdjust="spacing" text-anchor="start">Liste</text><text x="415.8" y="428.54" font-family="Liberation Sans" font-size="10.4" fill="#151515" stroke="#151515" stroke-width="0.18" textLength="91" lengthAdjust="spacing" text-anchor="start">23 oct. 2012 17:30</text><text x="617" y="428.54" font-family="Liberation Sans" font-size="10.4" fill="#555" stroke="#555" stroke-width="0.15" text-anchor="end" textLength="11" lengthAdjust="spacingAndGlyphs">--</text><text x="640.2" y="428.54" font-family="Liberation Sans" font-size="10.4" fill="#151515" stroke="#151515" stroke-width="0.22">Dossier</text><path d="M151.30 436.36 L157.80 440.46 L151.30 444.56 Z" fill="#777"/><path d="M165.0 435.96 Q165.0 434.46 166.0 434.46 L169.6 434.46 Q170.4 434.46 170.8 435.46 L171.1 436.26 L177.0 436.26 Q178.0 436.26 178.0 437.26 L178.0 445.06 Q178.0 445.65999999999997 177.4 445.65999999999997 L165.6 445.65999999999997 Q165.0 445.65999999999997 165.0 445.06 Z" fill="url(#lf)" stroke="#6f9bc2" stroke-width="0.75"/><rect x="165.5" y="437.06" width="12" height="0.8" fill="#e3eef8" opacity=".8"/><text x="183.0" y="443.96" font-family="Liberation Sans" font-size="10.4" fill="#151515" stroke="#151515" stroke-width="0.18" textLength="89.7" lengthAdjust="spacing" text-anchor="start">Machines virtuelles</text><text x="415.8" y="443.96" font-family="Liberation Sans" font-size="10.4" fill="#151515" stroke="#151515" stroke-width="0.18" textLength="87.6" lengthAdjust="spacing" text-anchor="start">9 nov. 2012 21:55</text><text x="617" y="443.96" font-family="Liberation Sans" font-size="10.4" fill="#555" stroke="#555" stroke-width="0.15" text-anchor="end" textLength="11" lengthAdjust="spacingAndGlyphs">--</text><text x="640.2" y="443.96" font-family="Liberation Sans" font-size="10.4" fill="#151515" stroke="#151515" stroke-width="0.22">Dossier</text><path d="M151.30 451.78 L157.80 455.88 L151.30 459.98 Z" fill="#777"/><path d="M165.0 451.38 Q165.0 449.88 166.0 449.88 L169.6 449.88 Q170.4 449.88 170.8 450.88 L171.1 451.68 L177.0 451.68 Q178.0 451.68 178.0 452.68 L178.0 460.48 Q178.0 461.08 177.4 461.08 L165.6 461.08 Q165.0 461.08 165.0 460.48 Z" fill="url(#lf)" stroke="#6f9bc2" stroke-width="0.75"/><rect x="165.5" y="452.48" width="12" height="0.8" fill="#e3eef8" opacity=".8"/></svg>
</body></html>
